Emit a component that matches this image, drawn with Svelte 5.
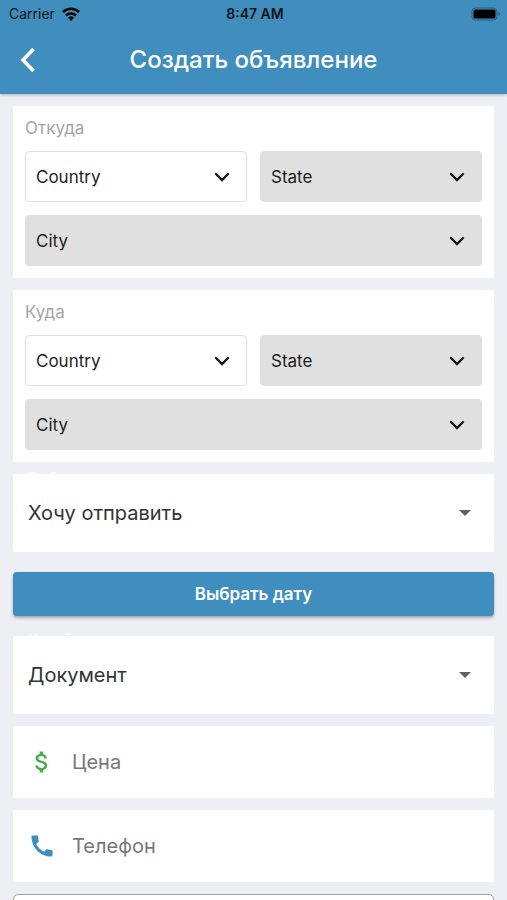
<script lang="ts">
	const places = [
		{ id: 'from', title: 'Откуда' },
		{ id: 'to', title: 'Куда' }
	];

	let action = $state('Хочу отправить');
	let kind = $state('Документ');
	let price = $state('');
	let phone = $state('');
	let comment = $state('');
</script>

{#snippet placeSelect(id: string, name: string, disabled: boolean)}
	<div class="place" class:wide={name === 'City'} class:disabled>
		<select {id} aria-label={name} {disabled}>
			<option>{name}</option>
		</select>
		<svg class="chevron" viewBox="0 0 16 16" aria-hidden="true">
			<path d="M2 5l6 6 6-6" />
		</svg>
	</div>
{/snippet}

<header>
	<div class="status">
		<span class="carrier">
			Carrier
			<svg class="wifi" viewBox="0 0 18 14" aria-hidden="true">
				<path d="M1 5a11.500 11.500 0 0 1 16 0" />
				<path d="M4 8.500a7.300 7.300 0 0 1 10 0" />
				<path class="wedge" d="M9 14l-3-3.200a4.300 4.300 0 0 1 6 0z" />
			</svg>
		</span>
		<span class="time">8:47 AM</span>
		<svg class="battery" viewBox="0 0 30 14" aria-hidden="true">
			<rect class="shell" x="1" y="1" width="25" height="12" rx="3.500" />
			<rect x="2.500" y="2.500" width="22" height="9" rx="1.500" />
			<path class="tip" d="M27.500 5c1.800.5 1.800 3.500 0 4z" />
		</svg>
	</div>
	<div class="toolbar">
		<button class="back" aria-label="Назад">
			<svg viewBox="0 0 28 28" aria-hidden="true">
				<path d="M19.500 3L9 14l10.500 11" />
			</svg>
		</button>
		<h1>Создать объявление</h1>
	</div>
</header>

<main>
	{#each places as place (place.id)}
		<section class="card places">
			<h2>{place.title}</h2>
			<div class="grid">
				{@render placeSelect(`${place.id}-country`, 'Country', false)}
				{@render placeSelect(`${place.id}-state`, 'State', true)}
				{@render placeSelect(`${place.id}-city`, 'City', true)}
			</div>
		</section>
	{/each}

	<div class="card dropdown">
		<label for="action">Выбор</label>
		<select id="action" bind:value={action}>
			<option>Хочу отправить</option>
			<option>Хочу доставить</option>
		</select>
		<svg class="arrow" viewBox="0 0 12 6" aria-hidden="true"><path d="M0 0h12L6 6z" /></svg>
	</div>

	<button class="date">Выбрать дату</button>

	<div class="card dropdown">
		<label for="kind">Какой груз</label>
		<select id="kind" bind:value={kind}>
			<option>Документ</option>
			<option>Посылка</option>
		</select>
		<svg class="arrow" viewBox="0 0 12 6" aria-hidden="true"><path d="M0 0h12L6 6z" /></svg>
	</div>

	<label class="card field">
		<svg class="dollar" viewBox="0 0 24 24" aria-hidden="true">
			<path
				d="M11.800 10.900c-2.270-.59-3-1.200-3-2.150 0-1.090 1.010-1.850 2.700-1.850 1.780 0 2.440.85 2.500 2.100h2.210c-.07-1.720-1.120-3.300-3.210-3.810V3h-3v2.160c-1.940.42-3.500 1.680-3.500 3.610 0 2.310 1.910 3.460 4.700 4.130 2.500.6 3 1.480 3 2.410 0 .69-.49 1.790-2.700 1.790-2.060 0-2.870-.92-2.980-2.100h-2.200c.12 2.190 1.760 3.420 3.680 3.830V21h3v-2.150c1.950-.37 3.500-1.500 3.500-3.550 0-2.840-2.430-3.810-4.700-4.400z"
			/>
		</svg>
		<input type="text" inputmode="decimal" placeholder="Цена" aria-label="Цена" bind:value={price} />
	</label>

	<label class="card field">
		<svg class="phone" viewBox="0 0 24 24" aria-hidden="true">
			<path
				d="M20.010 15.380c-1.230 0-2.420-.2-3.530-.56-.35-.12-.74-.03-1.010.24l-1.570 1.970c-2.830-1.350-5.480-3.900-6.890-6.830l1.950-1.660c.27-.28.35-.67.24-1.020-.37-1.110-.56-2.300-.56-3.530 0-.54-.45-.99-.99-.99H4.190C3.650 3 3 3.240 3 3.990 3 13.280 10.730 21 20.010 21c.71 0 .99-.63.99-1.180v-3.450c0-.54-.45-.99-.99-.99z"
			/>
		</svg>
		<input type="tel" placeholder="Телефон" aria-label="Телефон" bind:value={phone} />
	</label>

	<textarea aria-label="Комментарий" rows="4" bind:value={comment}></textarea>
</main>

<style>
	:global(body) {
		background: #eeeff5;
		color: #1c1c1e;
		font-family: Inter, Roboto, sans-serif;
		font-size: 17px;
	}

	header {
		position: sticky;
		top: 0;
		z-index: 1;
		background: #3f8ebd;
		box-shadow: 0 1px 3px rgba(0, 0, 0, 0.25);
	}

	.status {
		display: grid;
		grid-template-columns: 1fr auto 1fr;
		align-items: center;
		height: 27px;
		padding: 0 6px 0 9px;
		color: #101418;
		font-size: 14px;
	}

	.carrier {
		display: flex;
		align-items: center;
		gap: 7px;
	}

	.time {
		font-weight: 600;
	}

	.wifi {
		width: 18px;
		height: 14px;
		fill: none;
		stroke: #000;
		stroke-width: 2.6;
	}

	.wifi .wedge {
		fill: #000;
		stroke: none;
	}

	.battery {
		justify-self: end;
		width: 30px;
		height: 14px;
	}

	.battery .shell {
		fill: none;
		stroke: #2b5f7e;
	}

	.battery .tip {
		fill: #2b5f7e;
	}

	.toolbar {
		display: grid;
		grid-template-columns: 56px 1fr 56px;
		align-items: center;
		height: 65px;
		padding-bottom: 2px;
	}

	button,
	select,
	input,
	textarea {
		border: 0;
		font: inherit;
	}

	.back {
		display: flex;
		justify-content: center;
		padding: 0;
		background: none;
	}

	.back svg {
		width: 28px;
		height: 28px;
		fill: none;
		stroke: #fff;
		stroke-width: 3.6;
	}

	h1 {
		margin: 0;
		color: #fff;
		font-size: 24px;
		font-weight: 500;
		text-align: center;
	}

	main {
		display: flex;
		flex-direction: column;
		gap: 12px;
		padding: 12px 13px;
	}

	.card {
		border-radius: 2px;
		background: #fff;
	}

	.places {
		padding: 12px;
	}

	h2 {
		margin: 0 0 13px;
		color: #a5a5a5;
		font-size: 17px;
		font-weight: 400;
		line-height: 20px;
	}

	.grid {
		display: grid;
		grid-template-columns: 1fr 1fr;
		gap: 13px;
	}

	.place {
		display: grid;
		align-items: center;
	}

	.wide {
		grid-column: span 2;
	}

	/* the icon shares the grid cell with its select */
	.place > *,
	.dropdown > select,
	.dropdown > .arrow {
		grid-area: 1 / 1;
	}

	select {
		appearance: none;
		width: 100%;
		background: none;
		color: inherit;
		opacity: 1;
	}

	.place select {
		height: 51px;
		padding: 0 10px;
		border: 1px solid #e0e0e0;
		border-radius: 4px;
	}

	.disabled select {
		background: #e0e0e0;
	}

	.chevron,
	.arrow {
		justify-self: end;
		pointer-events: none;
	}

	.chevron {
		width: 16px;
		height: 16px;
		margin-right: 17px;
		fill: none;
		stroke: #111;
		stroke-width: 2.4;
		stroke-linecap: round;
	}

	.dropdown {
		position: relative;
		display: grid;
		align-items: center;
		height: 78px;
		color: #333;
		font-size: 20px;
	}

	.dropdown label {
		position: absolute;
		top: -5px;
		left: 15px;
		color: #fff;
		font-size: 15px;
		line-height: 18px;
	}

	.dropdown select {
		height: 100%;
		padding: 0 15px;
	}

	.arrow {
		width: 12px;
		height: 6px;
		margin-right: 23px;
		fill: #616161;
	}

	.date {
		height: 44px;
		margin: 8px 0;
		border-radius: 4px;
		background: #3f8ebd;
		box-shadow: 0 2px 3px rgba(0, 0, 0, 0.3);
		color: #fff;
		font-weight: 600;
	}

	.field {
		display: flex;
		align-items: center;
		gap: 16px;
		height: 72px;
		padding: 0 15px;
	}

	.field svg {
		flex: none;
		width: 28px;
		height: 28px;
	}

	.dollar {
		fill: #43ae4a;
	}

	.phone {
		fill: #3f8ebd;
	}

	input {
		flex: 1;
		min-width: 0;
		padding: 0;
		background: none;
		font-size: 20px;
	}

	input::placeholder {
		color: #777;
		opacity: 1;
	}

	textarea {
		padding: 16px;
		border: 1px solid #a0a0a4;
		border-radius: 5px;
		background: #fff;
		resize: none;
	}
</style>
